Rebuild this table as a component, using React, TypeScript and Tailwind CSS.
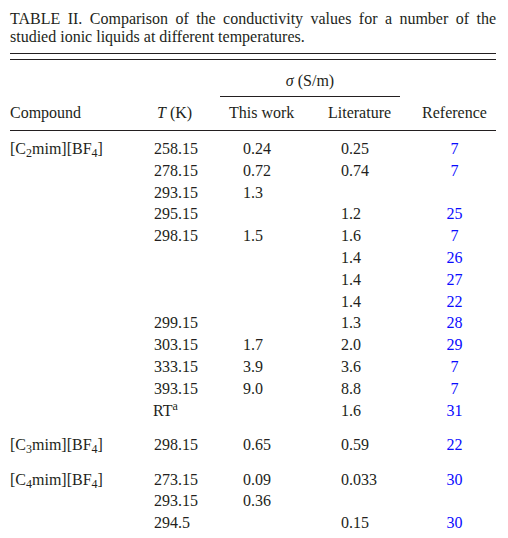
import React from 'react';

type Row = { t: React.ReactNode; work?: string; lit?: string; ref?: string };
type Group = { name: React.ReactNode; rows: Row[]; gap: string };

const C = (n: string) => (
  <>
    [C<sub>{n}</sub>mim][BF<sub>4</sub>]
  </>
);

const groups: Group[] = [
  {
    name: C('2'),
    gap: 'mt-[7px]',
    rows: [
      { t: '258.15', work: '0.24', lit: '0.25', ref: '7' },
      { t: '278.15', work: '0.72', lit: '0.74', ref: '7' },
      { t: '293.15', work: '1.3' },
      { t: '295.15', lit: '1.2', ref: '25' },
      { t: '298.15', work: '1.5', lit: '1.6', ref: '7' },
      { t: '', lit: '1.4', ref: '26' },
      { t: '', lit: '1.4', ref: '27' },
      { t: '', lit: '1.4', ref: '22' },
      { t: '299.15', lit: '1.3', ref: '28' },
      { t: '303.15', work: '1.7', lit: '2.0', ref: '29' },
      { t: '333.15', work: '3.9', lit: '3.6', ref: '7' },
      { t: '393.15', work: '9.0', lit: '8.8', ref: '7' },
      {
        t: (
          <span className="-ml-px">
            RT<sup>a</sup>
          </span>
        ),
        lit: '1.6',
        ref: '31',
      },
    ],
  },
  {
    name: C('3'),
    gap: 'mt-[13px]',
    rows: [{ t: '298.15', work: '0.65', lit: '0.59', ref: '22' }],
  },
  {
    name: C('4'),
    gap: 'mt-[12.5px]',
    rows: [
      { t: '273.15', work: '0.09', lit: '0.033', ref: '30' },
      { t: '293.15', work: '0.36' },
      { t: '294.5', lit: '0.15', ref: '30' },
    ],
  },
];

const cols = 'grid grid-cols-[144px_66px_90px_90px_96px]';

export default function App() {
  return (
    <div className="w-[508px] h-[538px] overflow-hidden bg-white pl-[10px] pr-[12px] pt-[10px] font-['Liberation_Serif','Times_New_Roman',serif] text-[16px] text-[#231f20]">
      <p className="leading-[18px] text-justify">
        TABLE II. Comparison of the conductivity values for a number of the studied ionic liquids at
        different temperatures.
      </p>

      <div className="mt-[7px] h-[7px] border-y border-[#231f20]" />

      {/* header */}
      <div className={`${cols} border-b border-[#231f20] leading-[18px]`}>
        <div className="col-start-3 col-span-2 pt-[12px] pb-[6px] text-center border-b border-[#231f20]">
          <i>σ</i> (S/m)
        </div>
        <div className="col-start-1 mt-[7px] pb-[8px]">Compound</div>
        <div className="mt-[7px] pl-[3px]">
          <i>T</i> (K)
        </div>
        <div className="mt-[7px] pl-[9px]">This work</div>
        <div className="mt-[7px] pl-[18px]">Literature</div>
        <div className="mt-[7px] pl-[13px] text-center">Reference</div>
      </div>

      {groups.map((g, gi) => (
        <div key={gi} className={`${cols} ${g.gap} leading-[21.8px]`}>
          {g.rows.map((r, ri) => (
            <React.Fragment key={ri}>
              <div>{ri === 0 ? g.name : ''}</div>
              <div>{r.t}</div>
              <div className="pl-[23px]">{r.work}</div>
              <div className="pl-[31px]">{r.lit}</div>
              <div className="pl-[13px] text-center text-[#0a0aff]">{r.ref}</div>
            </React.Fragment>
          ))}
        </div>
      ))}
    </div>
  );
}
